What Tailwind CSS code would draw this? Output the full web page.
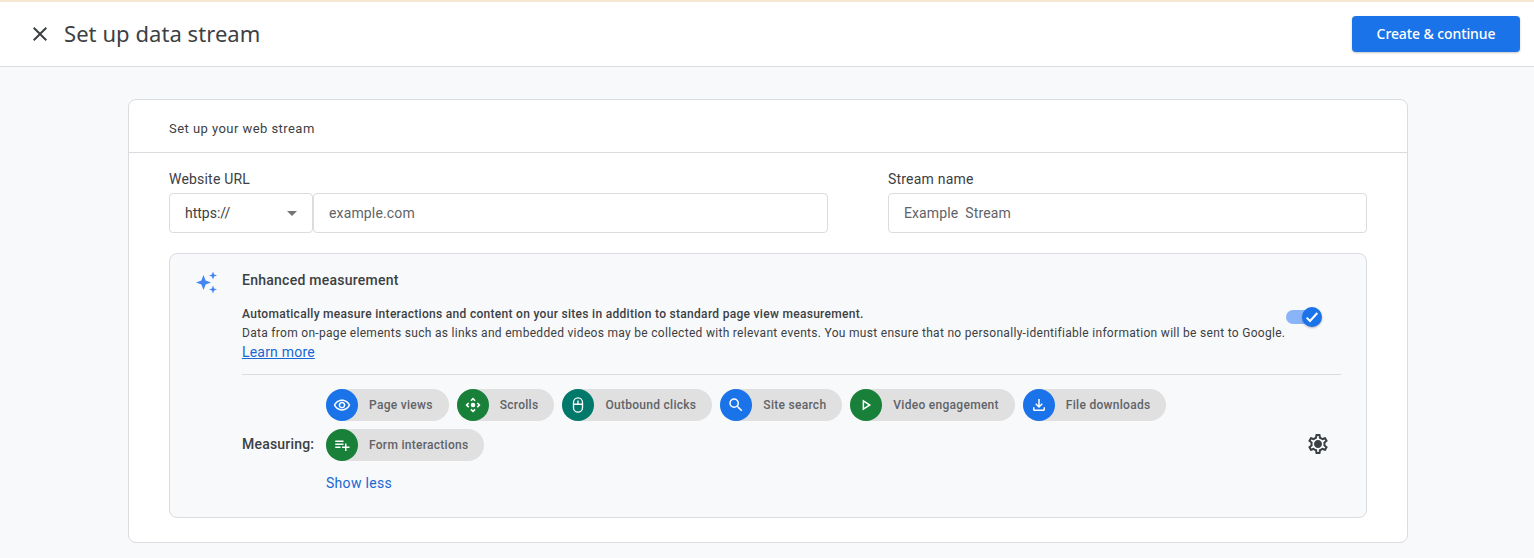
<!DOCTYPE html>
<html><head><meta charset="utf-8"><script src="https://cdn.jsdelivr.net/npm/@tailwindcss/browser@4"></script></head>
<body class="m-0 h-[558px] overflow-hidden bg-[#f8f9fa] font-['Roboto',sans-serif] text-[#3c4043]">
<div class="h-[2px] bg-[#f6e7d3]"></div>
<header class="h-[65px] bg-white border-b border-[#dadce0] flex items-center justify-between pl-[28px] pr-[14px] box-border">
  <div class="flex items-center gap-[12px]">
    <svg class="w-6 h-6" viewBox="0 0 24 24" fill="#3c4043"><path d="M19 6.41 17.59 5 12 10.59 6.41 5 5 6.41 10.59 12 5 17.59 6.41 19 12 13.41 17.59 19 19 17.59 13.41 12z"/></svg>
    <h1 class="text-[22px] font-normal font-['Noto_Sans',sans-serif] text-[#3c4043] tracking-[0.06px] pb-[2px]">Set up data stream</h1>
  </div>
  <button class="w-[168px] h-[36px] rounded-[4px] bg-[#1a73e8] text-white text-[14px] font-['Noto_Sans',sans-serif] font-medium tracking-[-0.1px] pb-[2px] shadow-[0_1px_2px_rgba(60,64,67,.3)]">Create &amp; continue</button>
</header>
<main class="pl-[128px] pt-[32px]">
  <section class="w-[1280px] bg-white border border-[#dadce0] rounded-[8px] h-[444px] box-border">
    <div class="h-[53px] border-b border-[#dadce0] pl-[40px] pt-[6px] flex items-center text-[13px] tracking-[0.45px] text-[#3c4043] box-border">Set up your web stream</div>
    <div class="px-[40px]">
      <div class="flex justify-between pt-[18px]">
        <div class="w-[659px]">
          <label class="block text-[14px] leading-[17px] tracking-[0.2px] mb-[5px]">Website URL</label>
          <div class="flex">
            <div class="w-[144px] h-[40px] border border-[#dadce0] rounded-[4px] flex items-center justify-between pl-[15px] pr-[15px] text-[14px] box-border">https://<span class="w-0 h-0 border-x-[5px] border-x-transparent border-t-[5px] border-t-[#757575]"></span></div>
            <div class="flex-1 h-[40px] border border-[#dadce0] rounded-[4px] flex items-center pl-[15px] text-[14px] tracking-[0.15px] text-[#5f6368] box-border">example.com</div>
          </div>
        </div>
        <div class="w-[479px]">
          <label class="block text-[14px] leading-[17px] tracking-[0.2px] mb-[5px]">Stream name</label>
          <div class="h-[40px] border border-[#dadce0] rounded-[4px] flex items-center pl-[15px] text-[14px] tracking-[0.1px] text-[#5f6368] box-border whitespace-pre">Example  Stream</div>
        </div>
      </div>
      <div class="mt-[20px] h-[265px] box-border bg-[#f8f9fa] border border-[#dadce0] rounded-[8px] pl-[24px] pr-[25px] flex gap-[24px]">
        <svg class="w-[24px] h-[24px] mt-[16px] shrink-0" viewBox="0 0 24 24" fill="#4285f4"><path d="M9.5 5 11.6 10.4 17 12.5 11.6 14.6 9.5 20 7.4 14.6 2 12.5 7.4 10.4z"/><path d="M19 1.5 20.1 4.4 23 5.5 20.1 6.6 19 9.5 17.9 6.6 15 5.5 17.9 4.4z"/><path d="M19 15.5 20.1 18.4 23 19.5 20.1 20.6 19 23.5 17.9 20.6 15 19.5 17.9 18.4z"/></svg>
        <div class="flex-1 min-w-0">
          <h2 class="pt-[17px] text-[14px] leading-[18px] font-medium tracking-[0.25px] text-[#3c4043]">Enhanced measurement</h2>
          <div class="relative mt-[15px] border-b border-[#dadce0] h-[71px]">
            <p class="text-[12px] leading-[20px] font-medium tracking-[0.3px] text-[#3c4043]">Automatically measure interactions and content on your sites in addition to standard page view measurement.</p>
            <p class="text-[12px] leading-[19px] tracking-[0.3px] text-[#3c4043] whitespace-nowrap">Data from on-page elements such as links and embedded videos may be collected with relevant events. You must ensure that no personally-identifiable information will be sent to Google.</p>
            <a class="block text-[14px] leading-[18px] tracking-[0.2px] text-[#1967d2] underline">Learn more</a>
            <div class="absolute left-[1044px] top-[3px] w-[38px] h-[22px]">
              <div class="absolute left-0 top-[3px] w-[26px] h-[14px] rounded-full bg-[#8ab4f8]"></div>
              <div class="absolute left-[16px] top-0 w-[20px] h-[20px] rounded-full bg-[#1a73e8] shadow-[0_1px_2px_rgba(60,64,67,.4)] flex items-center justify-center">
                <svg class="w-[16px] h-[16px]" viewBox="0 0 24 24" fill="none" stroke="#fff" stroke-width="3"><path d="M4 13l5 5L20 6"/></svg>
              </div>
            </div>
          </div>
          <div class="flex items-end pt-[14px]">
            <div class="text-[14px] font-medium tracking-[0.2px] w-[84px] h-[33px] shrink-0 flex items-center">Measuring:</div>
            <div class="flex-1">
              <div class="flex flex-wrap gap-[8px] w-[860px]">
                <div class="h-[32px] rounded-full bg-[#e0e0e0] flex items-center gap-[11px] pr-[16px] text-[12px] font-medium tracking-[0.285px] text-[#5f6368] whitespace-nowrap">
                  <span class="w-[32px] h-[32px] rounded-full bg-[#1a73e8] flex items-center justify-center"><svg class="w-[18px] h-[18px]" viewBox="0 0 24 24" fill="#fff"><path d="M12 6.5c3.79 0 7.17 2.13 8.82 5.5-1.65 3.37-5.02 5.5-8.82 5.5S4.83 15.37 3.18 12C4.83 8.63 8.21 6.5 12 6.5m0-2C7 4.5 2.73 7.61 1 12c1.73 4.39 6 7.5 11 7.5s9.27-3.11 11-7.5c-1.73-4.39-6-7.5-11-7.5zm0 5a2.5 2.5 0 0 1 0 5 2.5 2.5 0 0 1 0-5m0-2C9.52 7.5 7.5 9.52 7.5 12s2.02 4.5 4.5 4.5 4.5-2.02 4.5-4.5S14.48 7.5 12 7.5z"/></svg></span>Page views</div>
                <div class="h-[32px] rounded-full bg-[#e0e0e0] flex items-center gap-[11px] pr-[16px] text-[12px] font-medium tracking-[0.285px] text-[#5f6368] whitespace-nowrap">
                  <span class="w-[32px] h-[32px] rounded-full bg-[#188038] flex items-center justify-center"><svg class="w-[18px] h-[18px]" viewBox="0 0 24 24" fill="#fff"><circle cx="12" cy="12" r="3"/><path d="M12 2 8.5 5.5 10 7l2-2 2 2 1.5-1.5zM12 22l-3.5-3.5L10 17l2 2 2-2 1.5 1.5zM2 12l3.5-3.5L7 10l-2 2 2 2-1.5 1.5zM22 12l-3.5-3.5L17 10l2 2-2 2 1.5 1.5z"/></svg></span>Scrolls</div>
                <div class="h-[32px] rounded-full bg-[#e0e0e0] flex items-center gap-[11px] pr-[16px] text-[12px] font-medium tracking-[0.285px] text-[#5f6368] whitespace-nowrap">
                  <span class="w-[32px] h-[32px] rounded-full bg-[#00796b] flex items-center justify-center"><svg class="w-[18px] h-[18px]" viewBox="0 0 24 24" fill="none" stroke="#fff" stroke-width="1.8"><rect x="6" y="2.5" width="12" height="19" rx="6"/><path d="M6 11h12M12 6v5"/></svg></span>Outbound clicks</div>
                <div class="h-[32px] rounded-full bg-[#e0e0e0] flex items-center gap-[11px] pr-[16px] text-[12px] font-medium tracking-[0.285px] text-[#5f6368] whitespace-nowrap">
                  <span class="w-[32px] h-[32px] rounded-full bg-[#1a73e8] flex items-center justify-center"><svg class="w-[18px] h-[18px]" viewBox="0 0 24 24" fill="#fff"><path d="M15.5 14h-.79l-.28-.27A6.471 6.471 0 0 0 16 9.5 6.5 6.5 0 1 0 9.5 16c1.61 0 3.09-.59 4.23-1.57l.27.28v.79l5 4.99L20.49 19l-4.99-5zm-6 0C7.01 14 5 11.99 5 9.5S7.01 5 9.5 5 14 7.01 14 9.5 11.99 14 9.5 14z"/></svg></span>Site search</div>
                <div class="h-[32px] rounded-full bg-[#e0e0e0] flex items-center gap-[11px] pr-[16px] text-[12px] font-medium tracking-[0.285px] text-[#5f6368] whitespace-nowrap">
                  <span class="w-[32px] h-[32px] rounded-full bg-[#188038] flex items-center justify-center"><svg class="w-[18px] h-[18px]" viewBox="0 0 24 24" fill="none" stroke="#fff" stroke-width="2"><path d="M8.5 6.5v11l8.5-5.5z"/></svg></span>Video engagement</div>
                <div class="h-[32px] rounded-full bg-[#e0e0e0] flex items-center gap-[11px] pr-[16px] text-[12px] font-medium tracking-[0.285px] text-[#5f6368] whitespace-nowrap">
                  <span class="w-[32px] h-[32px] rounded-full bg-[#1a73e8] flex items-center justify-center"><svg class="w-[18px] h-[18px]" viewBox="0 0 24 24" fill="#fff"><path d="M18 15v3H6v-3H4v3c0 1.1.9 2 2 2h12c1.1 0 2-.9 2-2v-3h-2zm-1-4-1.41-1.41L13 12.17V4h-2v8.17L8.41 9.59 7 11l5 5 5-5z"/></svg></span>File downloads</div>
                <div class="h-[32px] rounded-full bg-[#e0e0e0] flex items-center gap-[11px] pr-[16px] text-[12px] font-medium tracking-[0.285px] text-[#5f6368] whitespace-nowrap">
                  <span class="w-[32px] h-[32px] rounded-full bg-[#188038] flex items-center justify-center"><svg class="w-[18px] h-[18px]" viewBox="0 0 24 24" fill="#fff"><path d="M14 10H3v2h11v-2zm0-4H3v2h11V6zm4 8v-4h-2v4h-4v2h4v4h2v-4h4v-2h-4zM3 16h7v-2H3v2z"/></svg></span>Form interactions</div>
              </div>
            </div>
            <svg class="w-[24px] h-[24px] shrink-0 mr-[11px] mb-[5px]" viewBox="0 0 24 24" fill="#3c4043"><path d="M19.43 12.98c.04-.32.07-.64.07-.98s-.03-.66-.07-.98l2.11-1.65c.19-.15.24-.42.12-.64l-2-3.46c-.12-.22-.39-.3-.61-.22l-2.49 1c-.52-.4-1.08-.73-1.69-.98l-.38-2.65A.488.488 0 0 0 14 2h-4c-.25 0-.46.18-.49.42l-.38 2.65c-.61.25-1.17.59-1.69.98l-2.49-1c-.23-.09-.49 0-.61.22l-2 3.46c-.13.22-.07.49.12.64l2.11 1.65c-.04.32-.07.65-.07.98s.03.66.07.98l-2.11 1.65c-.19.15-.24.42-.12.64l2 3.46c.12.22.39.3.61.22l2.49-1c.52.4 1.08.73 1.69.98l.38 2.65c.03.24.24.42.49.42h4c.25 0 .46-.18.49-.42l.38-2.65c.61-.25 1.17-.59 1.69-.98l2.49 1c.23.09.49 0 .61-.22l2-3.46c.12-.22.07-.49-.12-.64l-2.11-1.65zM17.45 11.27c.04.31.05.52.05.73 0 .21-.02.43-.05.73l-.14 1.13.89.7 1.08.84-.7 1.21-1.27-.51-1.04-.42-.9.68c-.43.32-.84.56-1.25.73l-1.06.43-.16 1.13-.2 1.35h-1.4l-.19-1.35-.16-1.13-1.06-.43c-.43-.18-.83-.41-1.23-.71l-.91-.7-1.06.43-1.27.51-.7-1.21 1.08-.84.89-.7-.14-1.13c-.03-.31-.05-.54-.05-.74s.02-.43.05-.73l.14-1.13-.89-.7-1.08-.84.7-1.21 1.27.51 1.04.42.9-.68c.43-.32.84-.56 1.25-.73l1.06-.43.16-1.13.2-1.35h1.39l.19 1.35.16 1.13 1.06.43c.43.18.83.41 1.23.71l.91.7 1.06-.43 1.27-.51.7 1.21-1.07.85-.89.7.14 1.13zM12 8c-2.21 0-4 1.79-4 4s1.79 4 4 4 4-1.79 4-4-1.79-4-4-4z"/></svg>
          </div>
          <a class="block mt-[13px] ml-[84px] text-[14px] leading-[18px] tracking-[0.3px] text-[#1967d2]">Show less</a>
        </div>
      </div>
    </div>
  </section>
</main>
</body></html>
